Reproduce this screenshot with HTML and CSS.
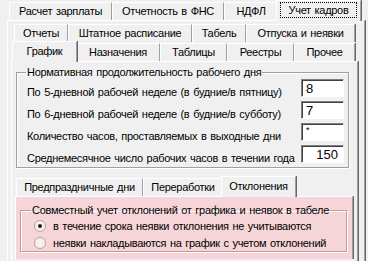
FILE: index.html
```html
<!DOCTYPE html>
<html lang="ru">
<head>
<meta charset="utf-8">
<title>Учет кадров</title>
<link rel="stylesheet" href="styles.css">
</head>
<body>
<div class="app">
  <div class="tabs tabs-top">
    <div class="tab w103">Расчет зарплаты</div>
    <div class="tab w112">Отчетность в ФНС</div>
    <div class="tab w54">НДФЛ</div>
    <div class="tab active w82"><span class="focus">Учет кадров</span></div>
  </div>
  <div class="panel outer">
    <div class="tabs tabs-r2">
      <div class="tab w54">Отчеты</div>
      <div class="tab w124">Штатное расписание</div>
      <div class="tab w54">Табель</div>
      <div class="tab w109">Отпуска и неявки</div>
    </div>
    <div class="tabs tabs-r3">
      <div class="tab active w62">График</div>
      <div class="tab w84">Назначения</div>
      <div class="tab w67">Таблицы</div>
      <div class="tab w67">Реестры</div>
      <div class="tab w61">Прочее</div>
    </div>
    <div class="panel page">
      <fieldset class="group">
        <legend>Нормативная продолжительность рабочего дня</legend>
        <div class="row"><span class="label">По 5-дневной рабочей неделе (в будние/в пятницу)</span><span class="input">8</span></div>
        <div class="row"><span class="label">По 6-дневной рабочей неделе (в будние/в субботу)</span><span class="input">7</span></div>
        <div class="row"><span class="label">Количество часов, проставляемых в выходные дни</span><span class="input star">*</span></div>
        <div class="row"><span class="label">Среднемесячное число рабочих часов в течении года</span><span class="input num">150</span></div>
      </fieldset>
      <div class="tabs tabs-sub">
        <div class="tab w127">Предпраздничные дни</div>
        <div class="tab w80">Переработки</div>
        <div class="tab active w72">Отклонения</div>
      </div>
      <div class="panel pink">
        <fieldset class="group pgroup">
          <legend>Совместный учет отклонений от графика и неявок в табеле</legend>
          <div class="radio"><span class="dot checked"></span>в течение срока неявки отклонения не учитываются</div>
          <div class="radio"><span class="dot"></span>неявки накладываются на график с учетом отклонений</div>
        </fieldset>
      </div>
    </div>
  </div>
</div>
</body>
</html>
```
FILE: styles.css
```css
* { box-sizing: border-box; }
html, body { margin: 0; padding: 0; }
body {
  width: 368px;
  height: 261px;
  overflow: hidden;
  background: #f0f0f0;
  font: 11px "Liberation Sans", Arial, sans-serif;
  letter-spacing: -0.3px;
  word-spacing: 1px;
  color: #000;
}
.app { padding-top: 2px; }

.tabs { display: flex; align-items: flex-end; position: relative; z-index: 1; }
.tab {
  flex: none;
  height: 18px;
  line-height: 16px;
  text-align: center;
  white-space: nowrap;
  border-top: 1px solid #fff;
  border-left: 1px solid #fff;
  border-right: 1px solid #a0a0a0;
  box-shadow: 1px 0 0 #696969;
  background: #f0f0f0;
}
.tab.active {
  height: 21px;
  margin: 0 -1px -1px -2px;
  line-height: 18px;
  position: relative;
  z-index: 2;
}
.w54 { width: 54px; } .w61 { width: 61px; } .w62 { width: 62px; }
.w67 { width: 67px; } .w72 { width: 72px; } .w80 { width: 80px; }
.w82 { width: 82px; } .w84 { width: 84px; } .w103 { width: 103px; }
.w109 { width: 109px; } .w112 { width: 112px; } .w124 { width: 124px; }
.w127 { width: 127px; }
.tab.active.w62 { width: 65px; }
.tab.active.w72 { width: 75px; }
.tab.active.w82 { width: 85px; }

.tabs-top { padding-left: 9px; height: 18px; }
.tabs-top .tab.active { margin-top: -2px; }
.focus { display: inline-block; border: 1px dotted #000; width: 77px; line-height: 14px; margin-top: 1px; }

.panel {
  border-top: 1px solid #fff;
  border-left: 1px solid #fff;
  border-right: 1px solid #a0a0a0;
  box-shadow: 1px 0 0 #696969;
}
.outer { margin: 0 3px 0 7px; padding: 3px 6px 0 3px; height: 250px; }
.tabs-r2 { padding-left: 3px; }
.tabs-r3 { padding-left: 3px; margin-top: -1px; }
.page { padding: 4px 8px 0 4px; height: 200px; }

.group {
  margin: 0;
  padding: 0 4px 0 10px;
  border: 1px solid #a0a0a0;
  box-shadow: inset 1px 1px 0 #fff, 1px 1px 0 #fff;
}
.group legend { padding: 0 1px; margin-left: -1px; line-height: 13px; }
.row { display: flex; justify-content: space-between; height: 22px; }
.label { padding-top: 7px; line-height: 13px; }
.input {
  width: 43px;
  height: 18px;
  background: #fff;
  border: 1px solid;
  border-color: #808080 #fff #fff #808080;
  box-shadow: inset 1px 1px 0 #404040;
  padding: 1px 0 0 4px;
  font-size: 13px;
  line-height: 15px;
  letter-spacing: 0;
}
.input.star { font-size: 9px; line-height: 9px; padding-top: 2px; }
.input.num { text-align: right; padding-right: 5px; }

.tabs-sub { margin-top: 8px; }

.pink {
  background: #f6d5d8;
  margin: 0 -4px 0 -1px;
  padding: 7px 5px 6px 4px;
  height: 63px;
}
.pgroup { border-color: #c49ca0; }
.pgroup legend { margin-left: 0; }
.radio { display: flex; align-items: center; height: 17px; padding-left: 3px; }
.dot {
  width: 12px; height: 12px;
  border-radius: 50%;
  background: #fbeeef;
  border: 1px solid #b8a0a2;
  margin-right: 7px;
  position: relative;
}
.dot.checked::after {
  content: "";
  position: absolute;
  left: 3px; top: 3px;
  width: 4px; height: 4px;
  border-radius: 50%;
  background: #222;
}
```
